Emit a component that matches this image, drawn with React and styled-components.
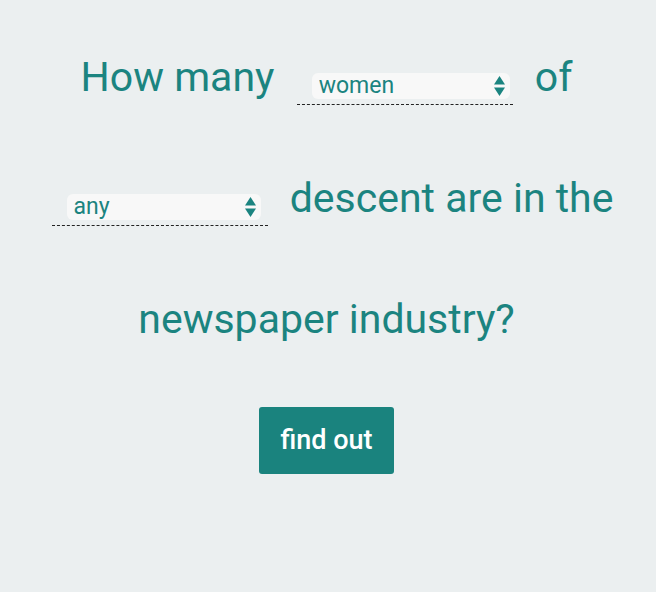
import React from "react";
import styled, { createGlobalStyle } from "styled-components";

const teal = "#1b8480";

const GlobalStyle = createGlobalStyle`
  html, body {
    margin: 0;
    padding: 0;
    background: #ebeff0;
    font-family: Roboto, "Noto Sans", sans-serif;
  }
`;

const Page = styled.main`
  min-height: 592px;
  box-sizing: border-box;
  padding: 17px 3px 0 0;
  display: flex;
  flex-direction: column;
  align-items: center;
`;

const Question = styled.p`
  margin: 0;
  width: 610px;
  text-align: center;
  font-size: 41px;
  line-height: 121px;
  color: ${teal};
  font-weight: 400;
`;

const Field = styled.span`
  display: inline-block;
  box-sizing: border-box;
  width: 216px;
  margin: 0 12px;
  padding: 0 3px 5px 15px;
  border-bottom: 1px dashed #222;
  font-size: 23px;
  line-height: 26px;
  text-align: left;
  vertical-align: -2px;
`;

const SelectBox = styled.span`
  position: relative;
  display: inline-block;
  width: ${(p) => p.$width}px;
  height: 26px;
  vertical-align: baseline;
`;

const Select = styled.select`
  appearance: none;
  -webkit-appearance: none;
  width: 100%;
  height: 26px;
  margin: 0;
  padding: 0 24px 0 7px;
  border: none;
  border-radius: 6px;
  background: #f8f8f8;
  color: ${teal};
  font-family: Roboto, "Noto Sans", sans-serif;
  font-size: 23px;
  line-height: 26px;
  outline: none;
`;

const Arrows = styled.svg`
  position: absolute;
  right: 5px;
  top: 3px;
  width: 11px;
  height: 20px;
  pointer-events: none;
`;

const Button = styled.button`
  margin-top: 27px;
  padding: 20px 21px;
  border: none;
  border-radius: 3px;
  background: #1a837e;
  color: #ffffff;
  font-family: Roboto, "Noto Sans", sans-serif;
  font-size: 27px;
  font-weight: 500;
  line-height: 27px;
  cursor: pointer;
`;

function Dropdown({ width, options }) {
  return (
    <Field>
      <SelectBox $width={width}>
        <Select defaultValue={options[0]}>
          {options.map((o) => (
            <option key={o} value={o}>
              {o}
            </option>
          ))}
        </Select>
        <Arrows viewBox="0 0 11 20">
          <polygon points="0,8.5 5.5,0 11,8.5" fill={teal} />
          <polygon points="0,11.5 11,11.5 5.5,20" fill={teal} />
        </Arrows>
      </SelectBox>
    </Field>
  );
}

export default function App() {
  return (
    <>
      <GlobalStyle />
      <Page>
        <Question>
          How many <Dropdown width={198} options={["women", "men", "people"]} /> of{" "}
          <Dropdown width={194} options={["any", "Asian", "Black", "Hispanic", "White"]} /> descent are in
          the newspaper industry?
        </Question>
        <Button type="button">find out</Button>
      </Page>
    </>
  );
}
